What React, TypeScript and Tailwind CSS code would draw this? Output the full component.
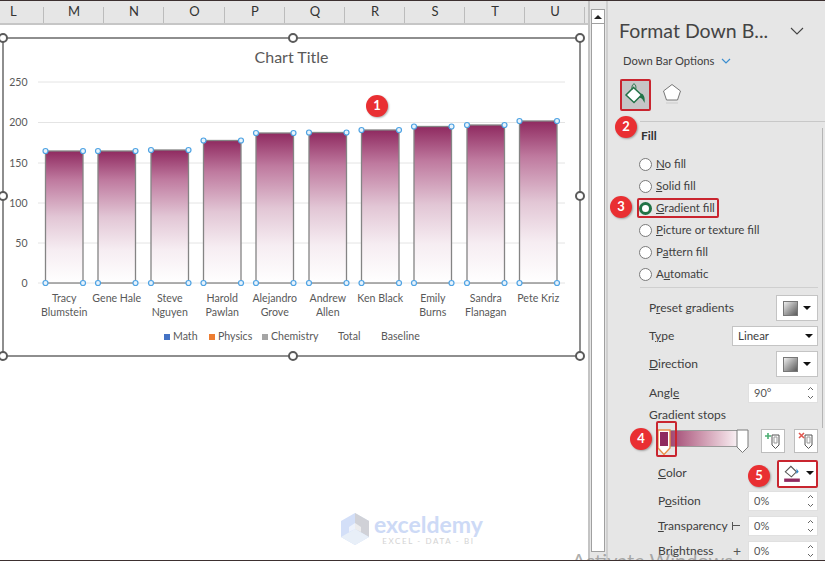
import React from "react";

const FONT = { fontFamily: 'Lato,"Open Sans",sans-serif' };
const cols = [
  ["L", 43], ["M", 60], ["N", 60], ["O", 61], ["P", 60], ["Q", 60], ["R", 60], ["S", 60], ["T", 60], ["U", 60],
] as const;
const bars = [
  { x: 45.5, top: 151, n: ["Tracy", "Blumstein"] },
  { x: 98, top: 151, n: ["Gene Hale"] },
  { x: 151, top: 150, n: ["Steve", "Nguyen"] },
  { x: 203.5, top: 140.5, n: ["Harold", "Pawlan"] },
  { x: 256, top: 133, n: ["Alejandro", "Grove"] },
  { x: 309, top: 132.5, n: ["Andrew", "Allen"] },
  { x: 361.5, top: 130, n: ["Ken Black"] },
  { x: 414, top: 126.5, n: ["Emily", "Burns"] },
  { x: 467, top: 125, n: ["Sandra", "Flanagan"] },
  { x: 519.5, top: 121, n: ["Pete Kriz"] },
];
const grid: [string, number][] = [["250", 82], ["200", 122.5], ["150", 163], ["100", 203], ["50", 243], ["0", 283]];

function Handle({ className }: { className: string }) {
  return <span className={`absolute w-[10px] h-[10px] rounded-full bg-white border-2 border-[#5a5a5a] ${className}`} />;
}
function Badge({ n, className }: { n: number; className: string }) {
  return (
    <span className={`absolute w-[22px] h-[22px] rounded-full bg-[#e92f32] text-white text-[13px] font-bold flex items-center justify-center shadow-[1px_1px_2px_rgba(0,0,0,0.3)] ${className}`}>
      {n}
    </span>
  );
}
function Redbox({ className }: { className: string }) {
  return <span className={`absolute border-2 border-[#c9252f] rounded-[2px] ${className}`} />;
}
function Radio({ label, u, rest, on }: { label?: string; u: string; rest: string; on?: boolean }) {
  return (
    <div className="h-[22px] flex items-center pl-[32px] text-[11.5px] text-[#404040]">
      <span className={`w-[13px] h-[13px] rounded-full bg-white mr-[4px] shrink-0 ${on ? "border-[3px] border-[#217346]" : "border border-[#7a7a7a]"}`} />
      <span>{label}<span className="underline">{u}</span>{rest}</span>
    </div>
  );
}
function GradSwatch() {
  return <span className="w-[15px] h-[15px] border border-[#777] bg-gradient-to-br from-[#efefef] to-[#5c5c5c]" />;
}
function Caret() {
  return <span className="w-0 h-0 border-x-[4px] border-x-transparent border-t-[4px] border-t-[#111]" />;
}
function Spinner({ v }: { v: string }) {
  return (
    <div className="w-[70px] h-[20px] bg-white flex items-center pl-[5px] pr-[3px] justify-between text-[11px] text-[#555] border border-[#e0e0e0]">
      {v}
      <svg width="7" height="16" viewBox="0 0 7 16" fill="none" stroke="#666" strokeWidth="1"><path d="M1 5 3.500 2.500 6 5M1 11l2.500 2.500L6 11" /></svg>
    </div>
  );
}
function PickBox() {
  return (
    <div className="w-[42px] h-[26px] bg-white border border-[#c4c4c4] flex items-center justify-center gap-[5px]">
      <GradSwatch /><Caret />
    </div>
  );
}
function StopBtn({ color, mark }: { color: string; mark: string }) {
  return (
    <div className="w-[24px] h-[24px] bg-white border border-[#bdbdbd] flex items-center justify-center">
      <svg width="16" height="18" viewBox="0 0 16 18" fill="none">
        <path d="M7 3h7v10l-3.500 3.500L7 13Z" fill="#fff" stroke="#555" />
        <path d="M9 5h3v6H9Z" stroke="#999" />
        <path d={mark} stroke={color} strokeWidth="1.6" />
      </svg>
    </div>
  );
}

export default function App() {
  return (
    <div className="relative w-[825px] h-[561px] overflow-hidden flex bg-white border-t border-b border-[#3d3030]" style={FONT}>
      {/* sheet */}
      <div className="w-[590px] h-full flex flex-col shrink-0 border-r-2 border-[#c4c4c4]">
        <div className="h-[24px] bg-[#e6e6e6] flex shrink-0 border-b-2 border-[#c6c6c6] pl-[1px] pr-[2px]">
          {cols.map(([c, w], i) => (
            <div key={c} style={{ width: w }} className={`relative h-full flex items-center text-[13px] text-[#333] ${i === 0 ? "justify-start pl-[9px]" : "justify-center"}`}>
              {c}
              <span className="absolute right-0 bottom-0 h-[16px] w-[1px] bg-[#bcbcbc]" />
            </div>
          ))}
        </div>
        <div className="flex-1 relative">
          <div className="relative ml-[2px] mt-[12px] w-[579px] h-[320px] border-2 border-[#8e8e8e] flex flex-col">
            <div className="h-[33px] pt-[7px] text-center text-[16px] leading-[22px] text-[#595959]">Chart Title</div>
            <svg width="575" height="252" viewBox="4 72 575 252" className="shrink-0">
              <defs>
                <linearGradient id="bar" x1="0" y1="0" x2="0" y2="1">
                  <stop offset="0" stopColor="#8f2a60" />
                  <stop offset="0.22" stopColor="#bf7a9f" />
                  <stop offset="0.5" stopColor="#e2c6d5" />
                  <stop offset="0.75" stopColor="#f6edf2" />
                  <stop offset="1" stopColor="#ffffff" />
                </linearGradient>
              </defs>
              {grid.map(([l, y]) => (
                <g key={l}>
                  <line x1="38" x2="565" y1={y} y2={y} stroke="#e4e4e4" />
                  <text x="27.5" y={y + 3.5} textAnchor="end" fontSize="10.5" fill="#595959">{l}</text>
                </g>
              ))}
              {bars.map((b) => (
                <g key={b.x}>
                  <rect x={b.x} y={b.top} width="37.5" height={283 - b.top} fill="url(#bar)" stroke="#848484" strokeWidth="1.3" />
                  {[[b.x, b.top], [b.x + 37.5, b.top], [b.x, 283], [b.x + 37.5, 283]].map(([cx, cy], i) => (
                    <circle key={i} cx={cx} cy={cy} r="2.5" fill="#e8f3fc" stroke="#4fa3e3" strokeWidth="1.2" />
                  ))}
                  {b.n.map((t, i) => (
                    <text key={t} x={b.x + 18.75} y={301.5 + i * 14} textAnchor="middle" fontSize="10.6" fill="#595959">{t}</text>
                  ))}
                </g>
              ))}
            </svg>
            <div className="flex items-center h-[14px] mt-[6px] pl-[160px] text-[10.6px] text-[#595959]">
              <span className="w-[6px] h-[6px] bg-[#4472c4] mr-[3px]" /><span className="w-[36px]">Math</span>
              <span className="w-[6px] h-[6px] bg-[#ed7d31] mr-[3px]" /><span className="w-[44px]">Physics</span>
              <span className="w-[6px] h-[6px] bg-[#a5a5a5] mr-[3px]" /><span className="w-[67px]">Chemistry</span>
              <span className="w-[43px]">Total</span><span>Baseline</span>
            </div>
            <Handle className="-left-[6px] -top-[6px]" />
            <Handle className="left-[284px] -top-[6px]" />
            <Handle className="-right-[6px] -top-[6px]" />
            <Handle className="-left-[6px] top-[152px]" />
            <Handle className="-right-[6px] top-[152px]" />
            <Handle className="-left-[6px] -bottom-[6px]" />
            <Handle className="left-[284px] -bottom-[6px]" />
            <Handle className="-right-[6px] -bottom-[6px]" />
          </div>
          <div className="absolute left-[341px] top-[488px] flex items-start gap-[5px] opacity-90">
            <svg width="28" height="32" viewBox="0 0 28 32">
              <path d="M14 0 28 8v16L14 32 0 24V8Z" fill="#cfdcf8" />
              <path d="M14 0 28 8v16l-14-8Z" fill="#c9c9c9" opacity=".8" />
              <path d="M0 24l14-8 14 8-14 8Z" fill="#e6eef8" />
              <path d="M14 10l6 4v5l-6-3-6 3v-5Z" fill="#fff" opacity=".6" />
            </svg>
            <div className="flex flex-col items-center">
              <span className="text-[23px] leading-[23px] font-bold text-[#c8d6f6]">exceldemy</span>
              <span className="text-[8px] leading-[10px] tracking-[1.6px] text-[#cfcfcf]">EXCEL - DATA - BI</span>
            </div>
          </div>
        </div>
      </div>
      {/* scrollbar */}
      <div className="w-[16px] h-full bg-[#e6e6e6] shrink-0 pt-[8px] pl-[1px] flex flex-col">
        <div className="h-[15px] w-[14px] shrink-0 bg-white border border-[#a0a0a0] flex items-center justify-center">
          <span className="w-0 h-0 border-x-[4px] border-x-transparent border-b-[4px] border-b-[#222]" />
        </div>
        <div className="w-[14px] h-[528px] bg-white border-x border-b border-[#a0a0a0]" />
      </div>
      {/* panel */}
      <div className="relative flex-1 h-full bg-[#e6e6e6] border-l-2 border-[#cfcfcf] text-[#404040] overflow-hidden">
        <div className="h-[28px] mt-[16px] pl-[11px] flex items-center">
          <span className="w-[171px] text-[19.5px] text-[#444] whitespace-nowrap">Format Down B...</span>
          <svg width="14" height="8" viewBox="0 0 14 8" fill="none" stroke="#444" strokeWidth="1.1"><path d="M1 1l6 6 6-6" /></svg>
        </div>
        <div className="h-[20px] mt-[6px] pl-[15px] flex items-center gap-[7px] text-[11.2px]">
          Down Bar Options
          <svg width="10" height="6" viewBox="0 0 10 6" fill="none" stroke="#3b8ed0" strokeWidth="1.2"><path d="M1 1l4 4 4-4" /></svg>
        </div>
        <div className="h-[30px] mt-[8px] pl-[12px] flex items-center gap-[12px]">
          <div className="w-[30px] h-[30px] bg-[#c6c6c6] flex items-center justify-center">
            <svg width="24" height="24" viewBox="0 0 24 24">
              <path d="M10.500 5.500 18.500 13 11 20.500 3 13Z" fill="#fff" stroke="#217346" strokeWidth="1.500" />
              <path d="M18.500 11.500c2.500 1 3.800 4.500 3 9.500-1-2.500-2.300-4.800-5-5.500Z" fill="#217346" />
              <path d="M9 8c-.5-3 .5-6 2-6s2.500 3 1.500 6" fill="none" stroke="#217346" strokeWidth="1" />
            </svg>
          </div>
          <svg width="20" height="22" viewBox="0 0 20 22" fill="none">
            <path d="M10 1.500 18.500 8l-3 9h-11l-3-9Z" fill="#fff" stroke="#777" />
            <path d="M4 20h12" stroke="#ccc" />
          </svg>
        </div>
        <div className="h-[13px] border-b border-[#c8c8c8] ml-[32px]" />
        <div className="h-[28px] flex items-center pl-[33px] text-[12px] font-bold text-[#333]">Fill</div>
        <div className="mt-[3px] -ml-[1px]">
          <Radio u="N" rest="o fill" />
          <Radio u="S" rest="olid fill" />
          <Radio u="G" rest="radient fill" on />
          <Radio u="P" rest="icture or texture fill" />
          <Radio label="P" u="a" rest="ttern fill" />
          <Radio label="A" u="u" rest="tomatic" />
        </div>
        <div className="h-[3px] border-b border-[#cfcfcf] ml-[32px] mr-[7px]" />
        <div className="pl-[41px] pr-[7px] text-[12px]">
          <div className="h-[26px] mt-[7px] flex items-center justify-between"><span>P<span className="underline">r</span>eset gradients</span><PickBox /></div>
          <div className="h-[20px] mt-[5px] flex items-center justify-between"><span>T<span className="underline">y</span>pe</span>
            <div className="w-[86px] h-[20px] bg-white border border-[#c4c4c4] pl-[5px] pr-[4px] flex items-center justify-between text-[11.5px]">Linear<Caret /></div>
          </div>
          <div className="h-[26px] mt-[5px] flex items-center justify-between"><span><span className="underline">D</span>irection</span><PickBox /></div>
          <div className="h-[20px] mt-[6px] flex items-center justify-between"><span>Angl<span className="underline">e</span></span><Spinner v="90°" /></div>
          <div className="h-[16px] mt-[4px] flex items-center">Gradient stops</div>
        </div>
        <div className="relative h-[28px] mt-[6px] pl-[50px] pr-[7px] flex items-start">
          <div className="relative w-[86px] h-[17px] mt-[1px] border border-[#9a9a9a] bg-gradient-to-r from-[#8f2a60] to-white">
            <svg className="absolute -left-[2px] -top-[2px]" width="14" height="27" viewBox="0 0 14 27">
              <path d="M1 1h12v18l-6 6.500L1 19Z" fill="#fff" stroke="#e8914a" strokeWidth="1.400" />
              <path d="M3 3h8v14H3Z" fill="#8f2a60" />
            </svg>
            <svg className="absolute -right-[6px] -top-[2px]" width="13" height="25" viewBox="0 0 13 25">
              <path d="M1 1h11v17l-5.500 5.500L1 18Z" fill="#fff" stroke="#7a7a7a" />
            </svg>
          </div>
          <div className="ml-auto flex gap-[9px]">
            <StopBtn color="#4caf73" mark="M3 1v6M0 4h6" />
            <StopBtn color="#e0574f" mark="M1 1l5 5M6 1 1 6" />
          </div>
        </div>
        <div className="pl-[50px] pr-[7px] text-[12px]">
          <div className="h-[26px] mt-[3px] flex items-center justify-between"><span><span className="underline">C</span>olor</span>
            <div className="w-[40px] h-[25px] bg-white flex items-center justify-center gap-[5px]">
              <svg width="18" height="19" viewBox="0 0 16 17">
                <path d="M2 7 7 2l5 5-4.500 4.500Z" fill="#fff" stroke="#555" />
                <path d="M12 4l2 3-2 2Z" fill="#2f87c9" />
                <rect x="1" y="13" width="14" height="3" fill="#8f2a60" />
              </svg>
              <Caret />
            </div>
          </div>
          <div className="h-[20px] mt-[5px] flex items-center justify-between"><span>P<span className="underline">o</span>sition</span><Spinner v="0%" /></div>
          <div className="h-[20px] mt-[5px] flex items-center justify-between"><span><span className="underline">T</span>ransparency</span>
            <span className="flex items-center gap-[8px]"><span className="w-[8px] h-[8px] border-l border-[#555] relative"><span className="absolute left-0 top-[3px] w-[7px] border-t border-[#555]" /></span><Spinner v="0%" /></span>
          </div>
          <div className="h-[20px] mt-[5px] flex items-center justify-between"><span>Brightness</span>
            <span className="flex items-center gap-[7px]"><span className="text-[#555] text-[14px] leading-none">+</span><Spinner v="0%" /></span>
          </div>
        </div>
        <span className="absolute right-0 top-[127px] w-[3px] h-[300px] border-l border-[#b5b5b5]" />
      </div>
      {/* overlays */}
      <span className="absolute left-[572px] top-[547px] text-[20px] leading-[24px] text-[#8a8a8a]/70 whitespace-nowrap">Activate Windows</span>
      <Badge n={1} className="left-[366px] top-[94px]" />
      <Redbox className="left-[620px] top-[78px] w-[31px] h-[32px]" />
      <Badge n={2} className="left-[615px] top-[115px]" />
      <Redbox className="left-[637px] top-[197px] w-[82px] h-[20px]" />
      <Badge n={3} className="left-[610px] top-[195px]" />
      <Redbox className="left-[656px] top-[420px] w-[21px] h-[36px]" />
      <Badge n={4} className="left-[630px] top-[427px]" />
      <Redbox className="left-[777px] top-[459px] w-[41px] h-[28px]" />
      <Badge n={5} className="left-[748px] top-[464px]" />
    </div>
  );
}
